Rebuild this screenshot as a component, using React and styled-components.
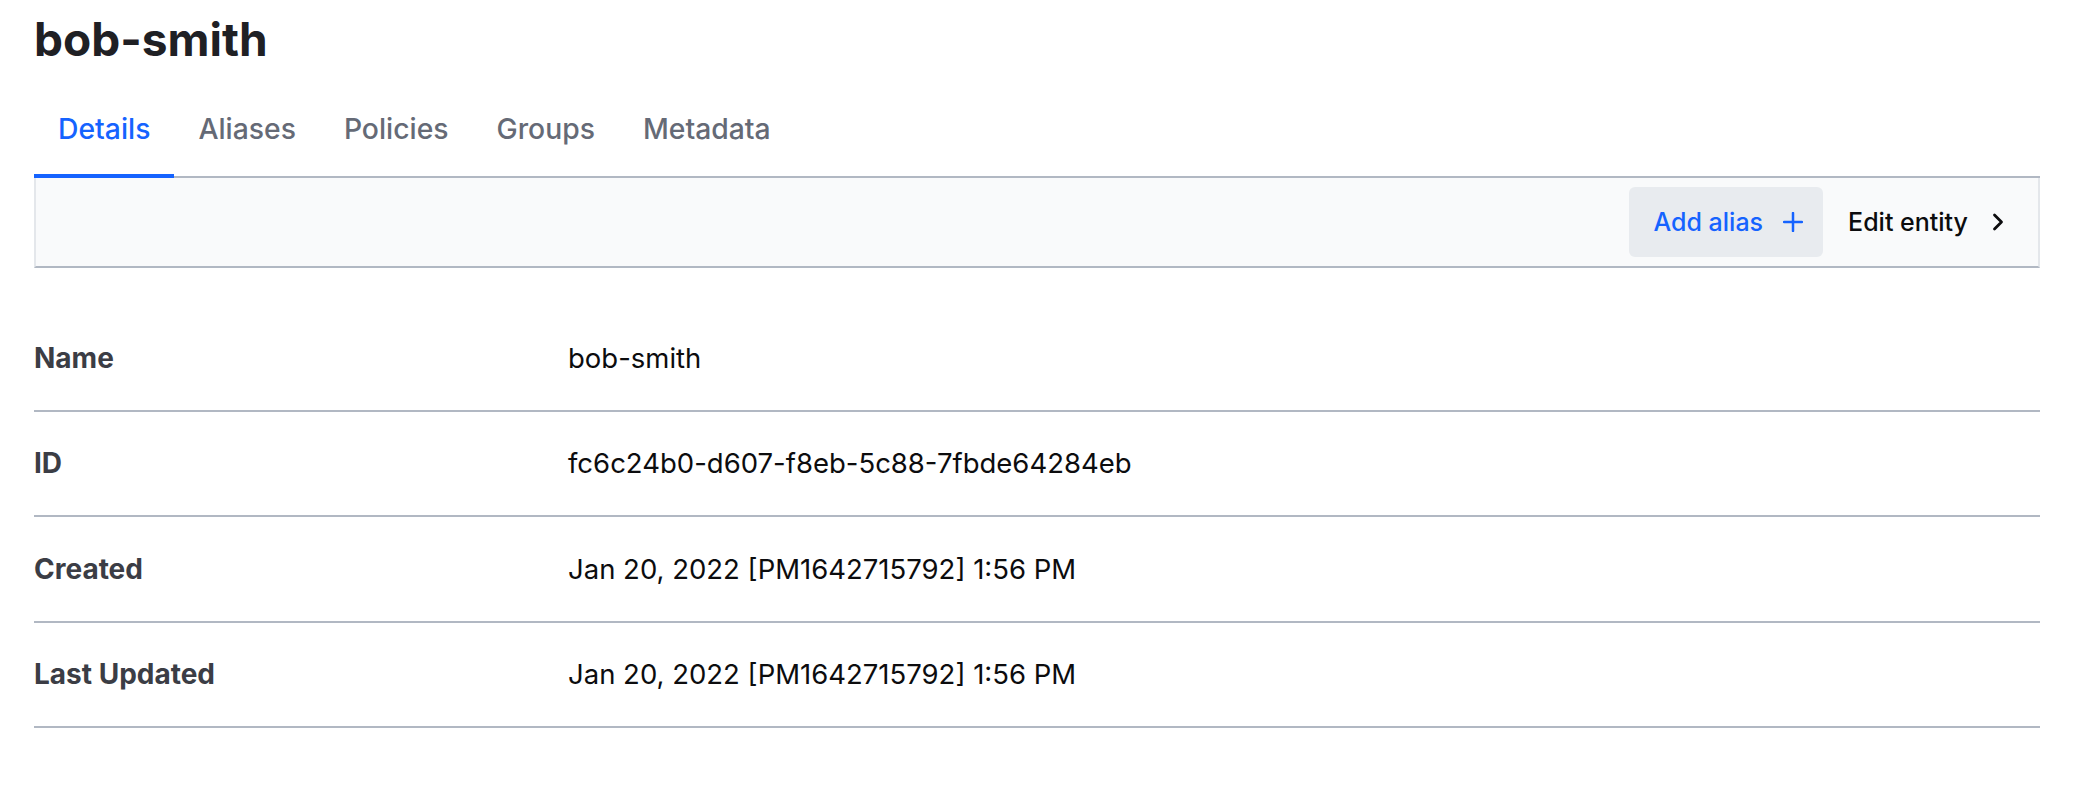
import React from 'react';
import styled, { createGlobalStyle } from 'styled-components';

const GlobalStyle = createGlobalStyle`
  body {
    margin: 0;
    padding: 0;
    background: #ffffff;
    font-family: Inter, "Noto Sans", sans-serif;
    -webkit-font-smoothing: antialiased;
  }
`;

const tabs = ['Details', 'Aliases', 'Policies', 'Groups', 'Metadata'];

const details = [
  { label: 'Name', value: 'bob-smith' },
  { label: 'ID', value: 'fc6c24b0-d607-f8eb-5c88-7fbde64284eb' },
  { label: 'Created', value: 'Jan 20, 2022 [PM1642715792] 1:56 PM' },
  { label: 'Last Updated', value: 'Jan 20, 2022 [PM1642715792] 1:56 PM' },
];

const PlusIcon = () => (
  <svg width="20" height="20" viewBox="0 0 20 20" fill="none">
    <path d="M10 1v18M1 10h18" stroke="currentColor" strokeWidth="2.5" strokeLinecap="round" />
  </svg>
);

const ChevronIcon = () => (
  <svg width="20" height="20" viewBox="0 0 20 20" fill="none">
    <path d="M6.5 3L13.5 10l-7 7" stroke="currentColor" strokeWidth="2.8" strokeLinecap="round" strokeLinejoin="round" />
  </svg>
);

const App = () => {
  return (
    <>
      <GlobalStyle />
      <Page>
        <Title>bob-smith</Title>
        <TabList>
          {tabs.map((tab, i) => (
            <Tab key={tab} $active={i === 0}>{tab}</Tab>
          ))}
        </TabList>
        <Toolbar>
          <ToolButton $variant="secondary">
            Add alias
            <PlusIcon />
          </ToolButton>
          <ToolButton>
            Edit entity
            <ChevronIcon />
          </ToolButton>
        </Toolbar>
        <InfoList>
          {details.map((row) => (
            <InfoRow key={row.label}>
              <Label>{row.label}</Label>
              <Value>{row.value}</Value>
            </InfoRow>
          ))}
        </InfoList>
      </Page>
    </>
  );
};

export default App;

/* Styled Components */

const Page = styled.div`
  padding: 11px 44px 60px 34px;
`;

const Title = styled.h1`
  margin: 0;
  font-size: 46px;
  line-height: 56px;
  font-weight: 700;
  color: #1f2024;
`;

const TabList = styled.div`
  display: flex;
  margin-top: 26px;
  border-bottom: 2px solid #b1b8c3;
`;

const Tab = styled.div`
  padding: 20px 24px 29px 24px;
  margin-bottom: -2px;
  font-size: 28.3px;
  line-height: 32px;
  font-weight: 500;
  color: ${(props) => (props.$active ? '#1563ff' : '#656a76')};
  border-bottom: 4px solid ${(props) => (props.$active ? '#1563ff' : 'transparent')};
`;

const Toolbar = styled.div`
  display: flex;
  justify-content: flex-end;
  align-items: center;
  height: 88px;
  padding: 0 10px;
  background: #f9fafb;
  border-left: 2px solid #e4e7eb;
  border-right: 2px solid #e4e7eb;
  border-bottom: 2px solid #b1b8c3;
`;

const ToolButton = styled.button`
  display: flex;
  align-items: center;
  gap: 20px;
  height: 70px;
  padding: 0 20px 0 25px;
  border: none;
  border-radius: 6px;
  font-family: inherit;
  font-size: 25px;
  font-weight: 500;
  cursor: pointer;
  background: ${(props) => (props.$variant === 'secondary' ? '#e8ebef' : 'transparent')};
  color: ${(props) => (props.$variant === 'secondary' ? '#1563ff' : '#0c0c0e')};
`;

const InfoList = styled.div`
  margin-top: 38px;
`;

const InfoRow = styled.div`
  display: flex;
  align-items: center;
  height: 103.5px;
  border-bottom: 2px solid #b1b8c3;
`;

const Label = styled.div`
  width: 534px;
  flex-shrink: 0;
  font-size: 28px;
  font-weight: 700;
  color: #3b3d45;
`;

const Value = styled.div`
  font-size: 27.5px;
  font-weight: 400;
  color: #0c0c0e;
`;
